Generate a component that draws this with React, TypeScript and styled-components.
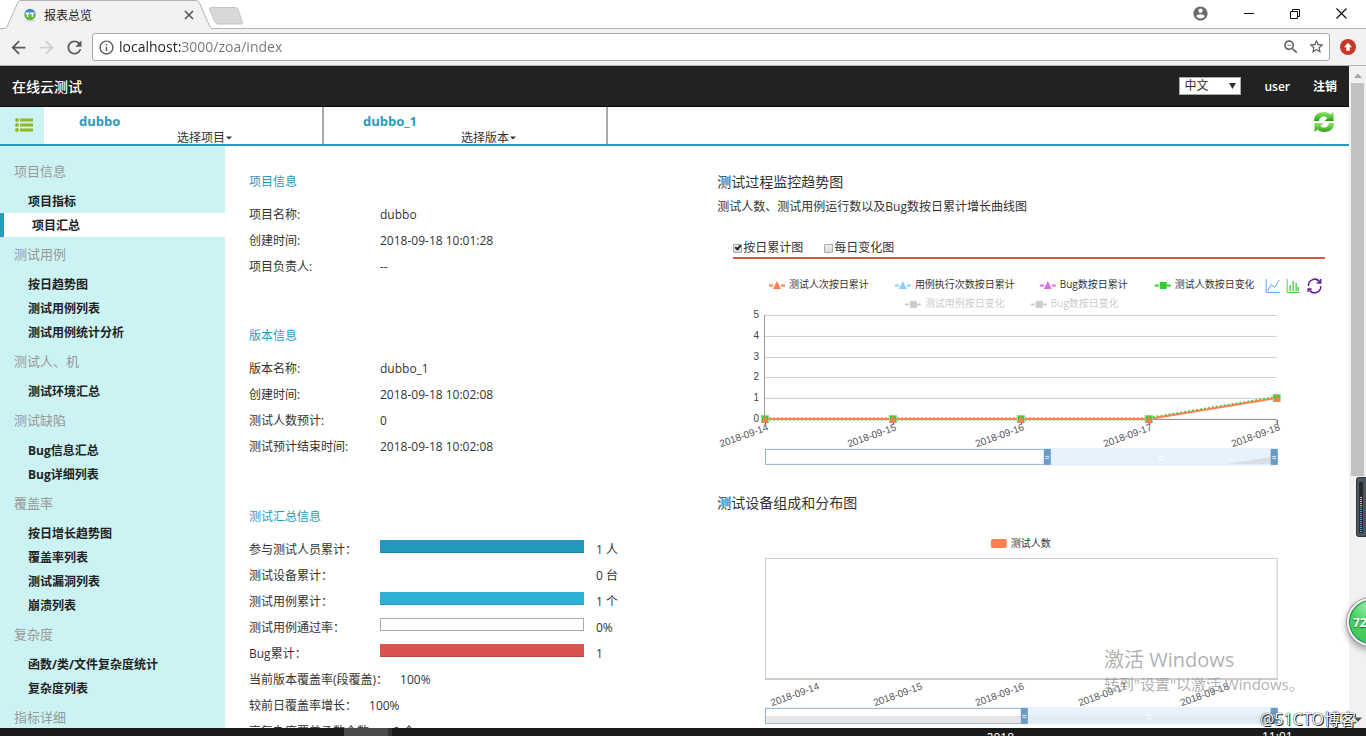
import React from 'react';
import styled, { createGlobalStyle } from 'styled-components';

const GlobalStyle = createGlobalStyle`
  * { box-sizing: border-box; }
  body {
    margin: 0;
    background: #fff;
    color: #333;
    font-family: "Open Sans", "Noto Sans CJK SC", sans-serif;
    font-size: 12px;
  }
  button, input, select { font-family: inherit; font-size: inherit; color: inherit; }
  button { border: 0; padding: 0; background: none; }
  ul, dl, dd, h1, h2, p { margin: 0; padding: 0; }
  ul { list-style: none; }
  a { color: inherit; text-decoration: none; }
`;

const teal = '#2a9abd';

const Screen = styled.div`
  position: relative;
  display: flex;
  flex-direction: column;
  height: 100vh;
  overflow: hidden;
`;

/* ---------- browser frame ---------- */

const TabStrip = styled.div`
  display: flex;
  flex: none;
  height: 29px;
  background: #fff;
  box-shadow: inset 0 -1px 0 #b4b4b4;
`;

const Tab = styled.div`
  position: relative;
  display: flex;
  align-items: center;
  gap: 8px;
  width: 212px;
  padding: 0 17px 0 24px;
  color: #222;
`;

const TabShape = styled.svg`
  position: absolute;
  left: 0;
  top: 0;
`;

const TabTitle = styled.span`
  position: relative;
  flex: 1;
`;

const TabIcon = styled.svg`
  position: relative;
  flex: none;
`;

const TabClose = styled.button`
  position: relative;
  display: flex;
`;

const NewTab = styled.button`
  display: flex;
  align-items: flex-start;
  padding: 7px 0 0;
  margin-left: -4px;
`;

const WindowControls = styled.div`
  display: flex;
  margin-left: auto;
  padding-right: 2px;
`;

const WindowButton = styled.button`
  display: flex;
  align-items: center;
  justify-content: center;
  width: 46px;
  height: 27px;
  color: #111;
`;

const ProfileButton = styled(WindowButton)`
  width: 44px;
  margin-right: 4px;
`;

const Toolbar = styled.div`
  display: flex;
  flex: none;
  align-items: center;
  gap: 4px;
  height: 37px;
  padding: 0 4px;
  background: #f2f2f2;
  border-bottom: 1px solid #b2b2b2;
`;

const NavGroup = styled.div`
  display: flex;
`;

const ToolButton = styled.button<{ $dim?: boolean }>`
  display: flex;
  align-items: center;
  justify-content: center;
  width: 28px;
  height: 28px;
  color: ${(p) => (p.$dim ? '#d0d0d0' : '#5a5a5a')};
`;

const Omnibox = styled.div`
  display: flex;
  flex: 1;
  align-items: center;
  height: 28px;
  padding: 0 4px 0 5px;
  background: #fff;
  border: 1px solid #a9a9a9;
  border-radius: 3px;
  color: #5a5a5a;
`;

const Address = styled.input`
  flex: 1;
  min-width: 0;
  height: 24px;
  margin-left: 4px;
  padding: 0 0 1px;
  border: 0;
  outline: 0;
  font-size: 14px;
  color: #757575;
  background: linear-gradient(90deg, #222 0 62px, #757575 62px);
  -webkit-background-clip: text;
  background-clip: text;
  -webkit-text-fill-color: transparent;
`;

const OmniActions = styled.div`
  display: flex;
  gap: 8px;
`;

const OmniButton = styled.button`
  display: flex;
  color: #5a5a5a;
`;

const Viewport = styled.div`
  display: flex;
  flex: 1;
  min-height: 0;
`;

const Page = styled.div`
  display: flex;
  flex: 1;
  flex-direction: column;
  min-width: 0;
  overflow: hidden;
`;

const ScrollTrack = styled.div`
  display: flex;
  flex: none;
  flex-direction: column;
  align-items: center;
  width: 17px;
  padding-top: 7px;
  background: #f1f1f1;
`;

const ScrollThumb = styled.div`
  width: 13px;
  height: 60%;
  margin-top: 5px;
  background: #c1c1c1;
`;

const Taskbar = styled.div`
  display: flex;
  flex: none;
  height: 8px;
  overflow: hidden;
  background: #1b1b1b;
  color: #fff;
  line-height: 12px;
`;

const TaskItem = styled.div`
  width: 48px;
  margin-left: 344px;
  background: #4a4a4a;
  border-right: 4px solid #333;
`;

const TaskLabel = styled.div`
  margin-left: auto;
  padding-top: 4px;
`;

const TaskClock = styled.div`
  width: 104px;
  margin-left: 248px;
  padding-top: 3px;
`;

/* ---------- application header ---------- */

const AppBar = styled.header`
  display: flex;
  flex: none;
  align-items: center;
  height: 41px;
  padding: 0 12px;
  background: #222;
  border-bottom: 1px solid #080808;
  color: #fff;
`;

const Brand = styled.a`
  margin-right: auto;
  font-size: 14px;
  font-weight: 500;
`;

const AppLink = styled.a`
  margin-left: 23px;
  font-weight: 600;
`;

const LanguageBox = styled.label`
  position: relative;
  display: flex;
`;

const LanguageSelect = styled.select`
  appearance: none;
  width: 62px;
  height: 18px;
  padding: 0 4px;
  border: 1px solid #a9a9a9;
  border-radius: 0;
  background: #fff;
  color: #333;
  line-height: 16px;
`;

const SelectArrow = styled.svg`
  position: absolute;
  right: 5px;
  top: 6px;
  pointer-events: none;
`;

const SubBar = styled.div`
  display: flex;
  flex: none;
  height: 39px;
  border-bottom: 2px solid ${teal};
`;

const MenuToggle = styled.button`
  display: flex;
  align-items: center;
  justify-content: center;
  width: 44px;
  margin-right: -4px;
  padding: 0 0 2px 4px;
  background: #cbf3f3;
`;

const Selector = styled.div`
  display: flex;
  flex-direction: column;
  align-items: flex-start;
  width: 284px;
  padding: 5px 0 0 39px;
  border-right: 2px solid #aaa;
`;

const SelectorName = styled.strong`
  color: ${teal};
  font-size: 13px;
  line-height: 18px;
`;

const SelectorButton = styled.button`
  display: flex;
  align-items: center;
  gap: 1px;
  margin-left: 98px;
  line-height: 16px;
`;

const RefreshButton = styled.button`
  display: flex;
  align-items: center;
  margin-left: auto;
  padding: 0 14px 8px 0;
`;

/* ---------- body ---------- */

const Body = styled.div`
  display: flex;
  flex: 1;
  min-height: 0;
`;

const Sidebar = styled.nav`
  flex: none;
  width: 225px;
  padding-top: 8px;
  overflow: hidden;
  background: #cbf3f3;
`;

const MenuHeading = styled.h2`
  padding-left: 14px;
  color: #999;
  font-size: 13px;
  font-weight: 400;
  line-height: 35px;
`;

const MenuLink = styled.a<{ $active?: boolean }>`
  display: block;
  height: 24px;
  padding-left: 28px;
  border-left: ${(p) => (p.$active ? `4px solid ${teal}` : '0')};
  background: ${(p) => (p.$active ? '#fff' : 'transparent')};
  color: #222;
  font-weight: 700;
  line-height: 26px;
`;

const Main = styled.main`
  display: grid;
  flex: 1;
  grid-template-columns: 5fr 7fr;
  min-width: 0;
  overflow: hidden;
`;

const InfoColumn = styled.div`
  display: flex;
  flex-direction: column;
  gap: 36px;
  padding: 16px 24px 0;
`;

const SectionTitle = styled.h2`
  color: ${teal};
  font-size: 12px;
  font-weight: 400;
  line-height: 40px;
`;

const InfoRow = styled.div`
  display: flex;
  line-height: 26px;
  white-space: nowrap;
`;

const InfoLabel = styled.dt`
  flex: none;
  width: 131px;
`;

const InlineLabel = styled.dt`
  margin-right: 12px;
`;

const Meter = styled.span<{ $color: string; $line: string }>`
  flex: none;
  width: 204px;
  height: 13px;
  margin: 3px 12px 0 0;
  background: ${(p) => p.$color};
  border: ${(p) => (p.$color === '#fff' ? '1px' : '0')} solid #aaa;
  border-bottom: 1px solid ${(p) => p.$line};
`;

const MeterGap = styled.span`
  flex: none;
  width: 216px;
`;

const TotalsSection = styled.section`
  padding-top: 1px;
`;

const ChartColumn = styled.div`
  min-width: 0;
  padding: 24px 24px 0;
`;

const ChartTitle = styled.h2`
  font-size: 14px;
  font-weight: 400;
  line-height: 24px;
`;

const ChartNote = styled.p`
  line-height: 26px;
`;

const ChartOptions = styled.div`
  display: flex;
  gap: 21px;
  margin: 19px 0 0 16px;
  border-bottom: 2px solid #d9534f;
  line-height: 18px;
`;

const Option = styled.label`
  display: flex;
  align-items: center;
  gap: 1px;
`;

const Check = styled.input`
  position: relative;
  appearance: none;
  width: 9px;
  height: 9px;
  margin: 0;
  border: 1px solid #aaa;
  border-radius: 1px;
  background: linear-gradient(#eee, #dcdcdc);
  &:checked::after {
    content: '';
    position: absolute;
    left: 2px;
    top: -1px;
    width: 2px;
    height: 4px;
    border: solid #222;
    border-width: 0 2px 2px 0;
    transform: rotate(40deg);
  }
`;

const ChartSvg = styled.svg`
  display: block;
  width: 100%;
  height: auto;
  overflow: visible;
  font-size: 10px;
`;

/* ---------- things floating over the desktop ---------- */

const ActivateNotice = styled.div`
  position: absolute;
  right: 62px;
  bottom: 42px;
  width: 200px;
  color: rgba(150, 150, 150, 0.75);
  font-size: 15px;
  line-height: 20px;
  white-space: nowrap;
`;

const ActivateTitle = styled.div`
  font-size: 20px;
  line-height: 28px;
`;

const Signature = styled.div`
  position: absolute;
  right: 10px;
  bottom: 5px;
  color: #fff;
  font-size: 16px;
  line-height: 24px;
  text-shadow: 1px 1px 0 #222, 0 0 1px #333, 0 0 1px #333;
`;

const ScrollDown = styled.svg`
  position: absolute;
  right: 4px;
  bottom: 14px;
`;

const ScoreBall = styled.div`
  position: absolute;
  right: -29px;
  bottom: 90px;
  display: flex;
  align-items: center;
  width: 48px;
  height: 48px;
  padding-left: 4px;
  border: 2px solid #eee;
  border-radius: 50%;
  background: radial-gradient(circle at 50% 10%, #a5efb0, #4bd162 45%, #3fc257);
  box-shadow: 0 0 0 1px #999, inset 0 0 0 1px #17805a, 0 3px 6px 1px rgba(0, 0, 0, 0.35);
  color: #fff;
  font-weight: 700;
  text-shadow: 0 1px 1px #17602a;
`;

const SideGauge = styled.svg`
  position: absolute;
  right: 0;
  top: 477px;
`;

/* ---------- data ---------- */

const menu: { title: string; items: string[] }[] = [
  { title: '项目信息', items: ['项目指标', '项目汇总'] },
  { title: '测试用例', items: ['按日趋势图', '测试用例列表', '测试用例统计分析'] },
  { title: '测试人、机', items: ['测试环境汇总'] },
  { title: '测试缺陷', items: ['Bug信息汇总', 'Bug详细列表'] },
  { title: '覆盖率', items: ['按日增长趋势图', '覆盖率列表', '测试漏洞列表', '崩溃列表'] },
  { title: '复杂度', items: ['函数/类/文件复杂度统计', '复杂度列表'] },
  { title: '指标详细', items: [] },
];

const projectInfo = [
  ['项目名称:', 'dubbo'],
  ['创建时间:', '2018-09-18 10:01:28'],
  ['项目负责人:', '--'],
];

const versionInfo = [
  ['版本名称:', 'dubbo_1'],
  ['创建时间:', '2018-09-18 10:02:08'],
  ['测试人数预计:', '0'],
  ['测试预计结束时间:', '2018-09-18 10:02:08'],
];

const totals: { label: string; value: string; color?: string; line?: string }[] = [
  { label: '参与测试人员累计：', value: '1 人', color: '#2498bd', line: '#1f83a3' },
  { label: '测试设备累计：', value: '0 台' },
  { label: '测试用例累计：', value: '1 个', color: '#2fb0d6', line: '#2898b9' },
  { label: '测试用例通过率：', value: '0%', color: '#fff', line: '#aaa' },
  { label: 'Bug累计：', value: '1', color: '#d9534f', line: '#bb4744' },
];

const rates = [
  ['当前版本覆盖率(段覆盖)：', '100%'],
  ['较前日覆盖率增长：', '100%'],
  ['高复杂度覆盖函数个数：', '0 个'],
];

const dates = ['2018-09-14', '2018-09-15', '2018-09-16', '2018-09-17', '2018-09-18'];
const pointX = [48, 176, 304, 432, 560];
const pointY = [160, 160, 160, 160, 139];
const gridY = [56, 77, 98, 118, 139, 160];

/* ---------- pieces ---------- */

function Glyph({ d, size }: { d: string; size: number }) {
  return (
    <svg width={size} height={size} viewBox="0 0 24 24" fill="currentColor" aria-hidden="true">
      <path d={d} />
    </svg>
  );
}

const glyphs = {
  back: 'M20 11H7.83l5.59-5.59L12 4l-8 8 8 8 1.41-1.41L7.83 13H20v-2z',
  forward: 'M12 4l-1.41 1.41L16.17 11H4v2h12.17l-5.58 5.59L12 20l8-8z',
  reload:
    'M17.65 6.35C16.2 4.9 14.21 4 12 4c-4.42 0-7.99 3.58-7.99 8s3.57 8 7.99 8c3.73 0 6.84-2.55 7.73-6h-2.08c-.82 2.33-3.04 4-5.65 4-3.31 0-6-2.69-6-6s2.69-6 6-6c1.66 0 3.14.69 4.22 1.78L13 11h7V4l-2.35 2.35z',
  info: 'M11 17h2v-6h-2v6zm1-15C6.48 2 2 6.48 2 12s4.48 10 10 10 10-4.48 10-10S17.52 2 12 2zm0 18c-4.41 0-8-3.59-8-8s3.59-8 8-8 8 3.59 8 8-3.59 8-8 8zM11 9h2V7h-2v2z',
  zoomOut:
    'M15.5 14h-.79l-.28-.27C15.41 12.59 16 11.11 16 9.5 16 5.91 13.09 3 9.5 3S3 5.91 3 9.5 5.91 16 9.5 16c1.61 0 3.09-.59 4.23-1.57l.27.28v.79l5 4.99L20.49 19l-4.99-5zm-6 0C7.01 14 5 11.99 5 9.5S7.01 5 9.5 5 14 7.01 14 9.5 11.99 14 9.5 14zM7 9h5v1H7z',
  star: 'M22 9.24l-7.19-.62L12 2 9.19 8.63 2 9.24l5.46 4.73L5.82 21 12 17.27 18.18 21l-1.63-7.03L22 9.24zM12 15.4l-3.76 2.27 1-4.28-3.32-2.88 4.38-.38L12 6.1l1.71 4.04 4.38.38-3.32 2.88 1 4.28L12 15.4z',
  account:
    'M12 2C6.48 2 2 6.48 2 12s4.48 10 10 10 10-4.48 10-10S17.52 2 12 2zm0 3c1.66 0 3 1.34 3 3s-1.34 3-3 3-3-1.34-3-3 1.34-3 3-3zm0 14.2c-2.5 0-4.71-1.28-6-3.22.03-1.99 4-3.08 6-3.08 1.99 0 5.97 1.09 6 3.08-1.29 1.94-3.5 3.22-6 3.22z',
};

function BrowserFrame() {
  return (
    <>
      <TabStrip>
        <Tab>
          <TabShape width="213" height="29" viewBox="0 0 213 29" aria-hidden="true">
            <path d="M5 29 L6 28 L18 2 Q19 0.5 21 0.5 H196 Q198 0.5 199 2 L211 28 L212 29 Z" fill="#f2f2f2" />
            <path d="M5 28.5 L7 27 L18 2 Q19 0.5 21 0.5 H196 Q198 0.5 199 2 L210 27 L212 28.5" fill="none" stroke="#b4b4b4" />
          </TabShape>
          <TabIcon width="12" height="14" viewBox="0 0 12 14" aria-hidden="true">
            <ellipse cx="6" cy="12.5" rx="4.5" ry="1" fill="#d5d5d5" />
            <path d="M0.2 6.5A5.8 5.8 0 0 1 11.8 6.5Z" fill="#3f8fd0" />
            <path d="M0.2 6.5A5.8 5.8 0 0 0 11.8 6.5Z" fill="#5ebb3a" />
            <path d="M1.5 4.5h4v1.4H4.2V9H2.9V5.9H1.5zM6.3 4.5h4v1.4H9V9H7.7V5.9H6.3z" fill="#fff" />
          </TabIcon>
          <TabTitle>报表总览</TabTitle>
          <TabClose aria-label="关闭标签页">
            <svg width="12" height="12" viewBox="0 0 12 12" aria-hidden="true">
              <path d="M2 2l8 8M10 2l-8 8" stroke="#555" strokeWidth="1.6" />
            </svg>
          </TabClose>
        </Tab>
        <NewTab aria-label="新标签页">
          <svg width="36" height="18" viewBox="0 0 36 18" aria-hidden="true">
            <path d="M3 0.5H27Q29 0.5 30 2.5L34.5 15.5Q35 17 33 17H10Q8 17 7 15L1.500 2.500Q1 0.500 3 0.500Z" fill="#d8d8d8" stroke="#c4c4c4" />
          </svg>
        </NewTab>
        <WindowControls>
          <ProfileButton aria-label="用户">
            <svg width="17" height="17" viewBox="0 0 24 24" fill="#6b6b6b" aria-hidden="true">
              <path d={glyphs.account} />
            </svg>
          </ProfileButton>
          <WindowButton aria-label="最小化">
            <svg width="10" height="10" viewBox="0 0 10 10" aria-hidden="true">
              <path d="M0 4.500H10" stroke="#111" />
            </svg>
          </WindowButton>
          <WindowButton aria-label="还原">
            <svg width="10" height="10" viewBox="0 0 10 10" fill="none" stroke="#111" aria-hidden="true">
              <path d="M0.500 2.500H7.500V9.500H0.500ZM2.500 2.500V0.500H9.500V7.500H7.500" />
            </svg>
          </WindowButton>
          <WindowButton aria-label="关闭">
            <svg width="11" height="11" viewBox="0 0 11 11" aria-hidden="true">
              <path d="M0.500 0.500L10.500 10.500M10.500 0.500L0.500 10.500" stroke="#111" strokeWidth="1.2" />
            </svg>
          </WindowButton>
        </WindowControls>
      </TabStrip>
      <Toolbar>
        <NavGroup>
          <ToolButton aria-label="后退"><Glyph d={glyphs.back} size={21} /></ToolButton>
          <ToolButton aria-label="前进" $dim><Glyph d={glyphs.forward} size={21} /></ToolButton>
          <ToolButton aria-label="重新加载"><Glyph d={glyphs.reload} size={21} /></ToolButton>
        </NavGroup>
        <Omnibox>
          <Glyph d={glyphs.info} size={17} />
          <Address aria-label="地址" readOnly value="localhost:3000/zoa/index" />
          <OmniActions>
            <OmniButton aria-label="缩放"><Glyph d={glyphs.zoomOut} size={18} /></OmniButton>
            <OmniButton aria-label="收藏"><Glyph d={glyphs.star} size={17} /></OmniButton>
          </OmniActions>
        </Omnibox>
        <ToolButton aria-label="更新">
          <svg width="16" height="16" viewBox="0 0 16 16" aria-hidden="true">
            <circle cx="8" cy="8" r="8" fill="#c5392b" />
            <path d="M8 3.800L12 8.200H9.700V11.800H6.300V8.200H4Z" fill="#fff" />
          </svg>
        </ToolButton>
      </Toolbar>
    </>
  );
}

function Caret() {
  return (
    <svg width="6" height="4" viewBox="0 0 6 4" aria-hidden="true">
      <path d="M0 0.500H6L3 3.500Z" fill="#333" />
    </svg>
  );
}

function DateLabels({ xs, y }: { xs: number[]; y: number }) {
  return (
    <g fill="#555" textAnchor="end" fontFamily="'Liberation Sans', sans-serif">
      {dates.map((date, i) => (
        <text key={date} transform={`translate(${xs[i]} ${y}) rotate(-20)`}>{date}</text>
      ))}
    </g>
  );
}

function ZoomSlider({ y, from, children }: { y: number; from: number; children?: React.ReactNode }) {
  return (
    <g>
      <rect x="48.500" y={y + 0.5} width="512" height="15" fill="#fff" stroke="#8fb0cf" />
      {children}
      <rect x={from} y={y - 1} width={560 - from} height="18" fill="#e7f2fc" />
      <g opacity="0.5">{children}</g>
      <path d={`M${(from + 560) / 2 - 2} ${y + 7.500}h5m-5 3h5`} stroke="#fff" />
      {[from, 554].map((x) => (
        <g key={x}>
          <rect x={x} y={y} width="7" height="16" fill="#6a9ac6" />
          <path d={`M${x + 1.500} ${y + 7.500}h4m-4 2h4`} stroke="#e3eef8" />
        </g>
      ))}
    </g>
  );
}

function LegendItem({ x, y, color, text, square, muted }: {
  x: number; y: number; color: string; text: string; square?: boolean; muted?: boolean;
}) {
  return (
    <g transform={`translate(${x} ${y})`}>
      <path d="M0 0.500H4M12 0.500H16" stroke={color} strokeWidth="2" />
      {square ? <rect x="5" y="-3" width="7" height="7" fill={color} /> : <path d="M8 -4L12 4H4Z" fill={color} />}
      <text x="20" y="3" fill={muted ? '#ccc' : '#333'}>{text}</text>
    </g>
  );
}

function TrendChart() {
  const line = pointX.map((x, i) => `${x},${pointY[i]}`).join(' ');
  return (
    <ChartSvg viewBox="0 0 608 232" role="img" aria-label="测试过程监控趋势图">
      <LegendItem x={52} y={26} color="#ff7f50" text="测试人次按日累计" />
      <LegendItem x={178} y={26} color="#87cefa" text="用例执行次数按日累计" />
      <LegendItem x={323} y={26} color="#da70d6" text="Bug数按日累计" />
      <LegendItem x={438} y={26} color="#32cd32" text="测试人数按日变化" square />
      <LegendItem x={188} y={45} color="#ccc" text="测试用例按日变化" square muted />
      <LegendItem x={314} y={45} color="#ccc" text="Bug数按日变化" square muted />
      <g fill="none">
        <path d="M549.500 20V33.500H563M551 32L554.500 25.500L558 28.500L562.500 21" stroke="#5aa9f8" />
        <path d="M570.500 20V33.500H583" stroke="#4ccb4c" />
        <path d="M573.500 32V26M576.500 32V22M579.500 32V24M581.500 32V28" stroke="#4ccb4c" strokeWidth="1.400" />
        <g stroke="#6a1b9a" strokeWidth="1.500">
          <path d="M592 27A6 6 0 0 1 603 23M604 20V24H600" />
          <path d="M604 27A6 6 0 0 1 593 31M591.500 33V30H595" />
        </g>
      </g>
      <g fill="#444" textAnchor="end" fontFamily="'Liberation Sans', sans-serif">
        {gridY.map((y, i) => <text key={y} x="42" y={y + 3}>{5 - i}</text>)}
      </g>
      {gridY.map((y, i) => (
        <path key={y} d={`M48 ${y + 0.5}H560`} stroke={i === 5 ? '#888' : '#ccc'} />
      ))}
      <path d="M47.500 56V161" stroke="#999" />
      <DateLabels xs={[52, 180, 308, 436, 564]} y={171} />
      {pointX.map((x) => <path key={x} d={`M${x + 0.5} 161v4`} stroke="#222" />)}
      <path d="M48 160H432" stroke="#32cd32" strokeWidth="4" strokeDasharray="2 2" opacity="0.5" />
      <path d="M432 159L560 138" stroke="#32cd32" strokeWidth="2" strokeDasharray="2 2" />
      <polyline points={line} fill="none" stroke="#ff7f50" strokeWidth="2" />
      {pointX.map((x, i) => (
        <g key={x} transform={`translate(${x} ${pointY[i]})`}>
          <rect x="-3.500" y="-3.500" width="7" height="7" fill="#32cd32" stroke="#8bdc8b" />
          <path d="M0 -4L3.500 4H-3.500Z" fill="#ff7f50" />
        </g>
      ))}
      <ZoomSlider y={190} from={327}>
        <path d="M510 205L560 197V205Z" fill="#ccc" />
      </ZoomSlider>
    </ChartSvg>
  );
}

function DeviceChart() {
  return (
    <ChartSvg viewBox="0 0 608 220" role="img" aria-label="测试设备组成和分布图">
      <rect x="274" y="24" width="16" height="9" rx="2" fill="#ff7f50" />
      <text x="294" y="32" fill="#333">测试人数</text>
      <rect x="48.500" y="43.500" width="512" height="121" fill="none" stroke="#ccc" />
      <path d="M48 164H561" stroke="#ccc" strokeWidth="2" />
      <DateLabels xs={[103, 206, 308, 411, 513]} y={174} />
      <ZoomSlider y={193} from={304}>
        <rect x="49" y="201" width="511" height="7" fill="#d5d5d5" fillOpacity="0.45" />
      </ZoomSlider>
    </ChartSvg>
  );
}

function InfoSection({ title, rows }: { title: string; rows: string[][] }) {
  return (
    <section>
      <SectionTitle>{title}</SectionTitle>
      <dl>
        {rows.map(([label, value]) => (
          <InfoRow key={label}>
            <InfoLabel>{label}</InfoLabel>
            <dd>{value}</dd>
          </InfoRow>
        ))}
      </dl>
    </section>
  );
}

export default function App() {
  return (
    <Screen>
      <GlobalStyle />
      <BrowserFrame />
      <Viewport>
        <Page>
          <AppBar>
            <Brand href="#">在线云测试</Brand>
            <LanguageBox>
              <LanguageSelect defaultValue="zh" aria-label="语言">
                <option value="zh">中文</option>
              </LanguageSelect>
              <SelectArrow width="7" height="6" viewBox="0 0 7 6" aria-hidden="true">
                <path d="M0 0H7L3.500 6Z" fill="#333" />
              </SelectArrow>
            </LanguageBox>
            <AppLink href="#">user</AppLink>
            <AppLink href="#">注销</AppLink>
          </AppBar>
          <SubBar>
            <MenuToggle aria-label="菜单">
              <svg width="20" height="16" viewBox="0 0 20 16" fill="#94b81e" aria-hidden="true">
                {[3, 8, 13].map((y) => (
                  <g key={y}>
                    <circle cx="3" cy={y} r="1.900" />
                    <rect x="6" y={y - 1.5} width="13" height="3" />
                  </g>
                ))}
              </svg>
            </MenuToggle>
            <Selector>
              <SelectorName>dubbo</SelectorName>
              <SelectorButton>选择项目<Caret /></SelectorButton>
            </Selector>
            <Selector>
              <SelectorName>dubbo_1</SelectorName>
              <SelectorButton>选择版本<Caret /></SelectorButton>
            </Selector>
            <RefreshButton aria-label="刷新">
              <svg width="22" height="22" viewBox="0 0 22 22" aria-hidden="true">
                <defs>
                  <linearGradient id="leaf" x1="0" y1="0" x2="0" y2="1">
                    <stop offset="0" stopColor="#8fe070" />
                    <stop offset="0.500" stopColor="#5cc83a" />
                    <stop offset="1" stopColor="#2f9a1c" />
                  </linearGradient>
                </defs>
                <path d="M1 10C1 4 5 1 11 1C14 1 16 2 17.500 3.500L20.500 1V10H11.500L14.500 7C11 4 6.500 5.500 6 10Z" fill="url(#leaf)" />
                <path d="M21 12C21 18 17 21 11 21C8 21 6 20 4.500 18.500L1.500 21V12H10.500L7.500 15C11 18 15.500 16.500 16 12Z" fill="url(#leaf)" />
              </svg>
            </RefreshButton>
          </SubBar>
          <Body>
            <Sidebar>
              {menu.map((group) => (
                <section key={group.title}>
                  <MenuHeading>{group.title}</MenuHeading>
                  <ul>
                    {group.items.map((item) => (
                      <li key={item}>
                        <MenuLink href="#" $active={item === '项目汇总'}>{item}</MenuLink>
                      </li>
                    ))}
                  </ul>
                </section>
              ))}
            </Sidebar>
            <Main>
              <InfoColumn>
                <InfoSection title="项目信息" rows={projectInfo} />
                <InfoSection title="版本信息" rows={versionInfo} />
                <TotalsSection>
                  <SectionTitle>测试汇总信息</SectionTitle>
                  <dl>
                    {totals.map((row) => (
                      <InfoRow key={row.label}>
                        <InfoLabel>{row.label}</InfoLabel>
                        {row.color ? <Meter $color={row.color} $line={row.line ?? row.color} /> : <MeterGap />}
                        <dd>{row.value}</dd>
                      </InfoRow>
                    ))}
                    {rates.map(([label, value]) => (
                      <InfoRow key={label}>
                        <InlineLabel>{label}</InlineLabel>
                        <dd>{value}</dd>
                      </InfoRow>
                    ))}
                  </dl>
                </TotalsSection>
              </InfoColumn>
              <ChartColumn>
                <ChartTitle>测试过程监控趋势图</ChartTitle>
                <ChartNote>测试人数、测试用例运行数以及Bug数按日累计增长曲线图</ChartNote>
                <ChartOptions>
                  <Option><Check type="checkbox" defaultChecked />按日累计图</Option>
                  <Option><Check type="checkbox" />每日变化图</Option>
                </ChartOptions>
                <TrendChart />
                <ChartTitle>测试设备组成和分布图</ChartTitle>
                <DeviceChart />
              </ChartColumn>
            </Main>
          </Body>
        </Page>
        <ScrollTrack>
          <svg width="8" height="5" viewBox="0 0 8 5" aria-hidden="true">
            <path d="M0 5L4 0.500L8 5Z" fill="#a3a3a3" />
          </svg>
          <ScrollThumb />
        </ScrollTrack>
      </Viewport>
      <Taskbar>
        <TaskItem />
        <TaskLabel>2018</TaskLabel>
        <TaskClock>11:01</TaskClock>
      </Taskbar>
      <ActivateNotice>
        <ActivateTitle>激活 Windows</ActivateTitle>
        转到"设置"以激活 Windows。
      </ActivateNotice>
      <SideGauge width="10" height="60" viewBox="0 0 10 60" aria-hidden="true">
        <rect x="0.500" y="0.500" width="12" height="59" rx="2" fill="#4c565e" stroke="#30363b" />
        <rect x="3" y="5" width="4" height="51" fill="#262b30" />
        <path d="M5 20V30" stroke="#e0c840" strokeWidth="2" strokeDasharray="1 1" />
        <path d="M5 30V55" stroke="#3fa9d8" strokeWidth="2" strokeDasharray="1 1" />
      </SideGauge>
      <ScoreBall>72</ScoreBall>
      <ScrollDown width="8" height="5" viewBox="0 0 8 5" aria-hidden="true">
        <path d="M0 0.500H8L4 5Z" fill="#505050" />
      </ScrollDown>
      <Signature>@51CTO博客</Signature>
    </Screen>
  );
}
